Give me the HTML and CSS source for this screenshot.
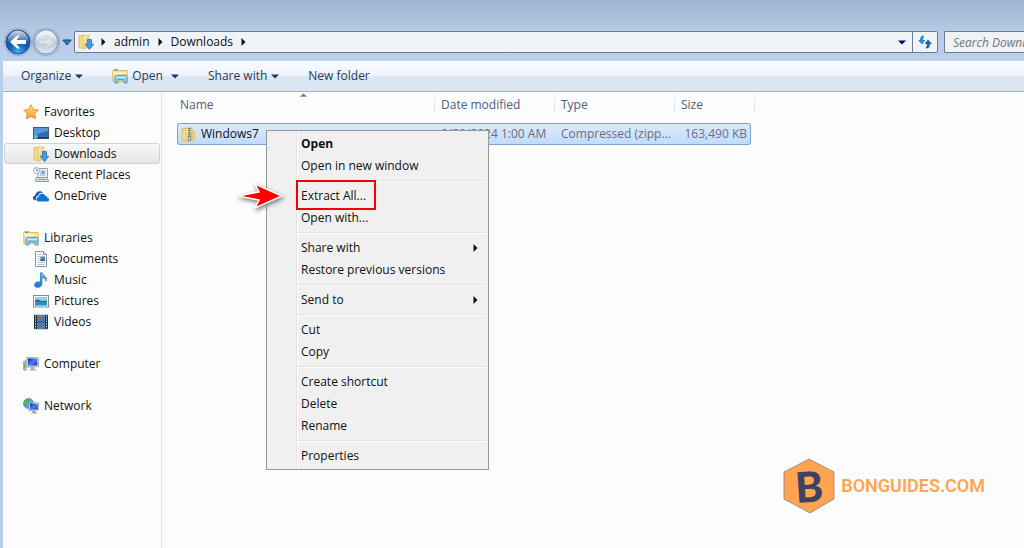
FILE: index.html
```html
<!DOCTYPE html>
<html lang="en">
<head>
    <meta charset="UTF-8">
    <meta name="viewport" content="width=device-width, initial-scale=1.0">
    <title>Downloads</title>
    <link rel="stylesheet" href="styles.css">
</head>
<body>
    <!-- Shared icons -->
    <svg class="sprite" aria-hidden="true">
        <defs>
            <linearGradient id="gFolder" x1="0" y1="0" x2="1" y2="1">
                <stop offset="0" stop-color="#fdf3bd"/>
                <stop offset="1" stop-color="#e3bd5c"/>
            </linearGradient>
            <linearGradient id="gBlue" x1="0" y1="0" x2="0" y2="1">
                <stop offset="0" stop-color="#5fc0f5"/>
                <stop offset="1" stop-color="#1a6fc9"/>
            </linearGradient>
            <linearGradient id="gStar" x1="0" y1="0" x2="0" y2="1">
                <stop offset="0" stop-color="#ffe96a"/>
                <stop offset="1" stop-color="#ff9a1f"/>
            </linearGradient>
            <linearGradient id="gScreen" x1="0" y1="0" x2="1" y2="1">
                <stop offset="0" stop-color="#0a1fa8"/>
                <stop offset="0.5" stop-color="#4a7ff0"/>
                <stop offset="1" stop-color="#0c24b4"/>
            </linearGradient>
            <radialGradient id="gBack" cx="0.5" cy="0.95" r="0.9">
                <stop offset="0" stop-color="#35b4f5"/>
                <stop offset="0.5" stop-color="#1456b4"/>
                <stop offset="1" stop-color="#2e5fa8"/>
            </radialGradient>
            <linearGradient id="gGloss" x1="0" y1="0" x2="0" y2="1">
                <stop offset="0" stop-color="#fff" stop-opacity="0.75"/>
                <stop offset="1" stop-color="#fff" stop-opacity="0.1"/>
            </linearGradient>
            <linearGradient id="gForward" x1="0" y1="0" x2="0" y2="1">
                <stop offset="0" stop-color="#dce4ee"/>
                <stop offset="0.5" stop-color="#b9c7d8"/>
                <stop offset="1" stop-color="#dde8f3"/>
            </linearGradient>
        </defs>
        <symbol id="star" viewBox="0 0 16 16">
            <path d="M8 .8l2.200 4.700 5.200.6-3.800 3.500 1 5.200L8 12.300l-4.600 2.500 1-5.200L.6 6.100l5.200-.6z" fill="url(#gStar)" stroke="#e88a25" stroke-width=".9" stroke-linejoin="round"/>
        </symbol>
        <symbol id="downloads" viewBox="0 0 16 16">
            <path d="M1 1.500h5l1 1v11.500H1z" fill="#f3dc8d" stroke="#d8b65b" stroke-width=".8"/>
            <path d="M5 .8l6 .4v11.600l-6 2.400z" fill="url(#gFolder)" stroke="#dcb963" stroke-width=".6"/>
            <path d="M9.500 5.500h4v4.700h2.200L11.500 15.500 7.300 10.200h2.200z" fill="#3f9ae2" stroke="#1c67b0" stroke-width=".7"/>
        </symbol>
        <symbol id="desktop" viewBox="0 0 16 16">
            <rect x=".5" y="2.500" width="15" height="11" fill="#2f6db8" stroke="#43566e"/>
            <path d="M1 3h14v3Q7 7 1 11z" fill="#5a97d8"/>
            <path d="M1 12h14v1.500H1z" fill="#1b3765"/>
            <circle cx="2.800" cy="11.800" r="2" fill="#5bc2e8"/>
            <circle cx="2.300" cy="11.300" r=".8" fill="#f08a3c"/>
        </symbol>
        <symbol id="recent" viewBox="0 0 16 16">
            <path d="M5 1.500h9.500v9H5z" fill="#eef3f8" stroke="#9aa4ae"/>
            <path d="M7 4h5M7 6h6M7 8h5" stroke="#7fb2d8"/>
            <path d="M9 4h2v3H9z" fill="#56a5d5"/>
            <path d="M3 10.500h11l1.500 4h-13z" fill="#e3e6e9" stroke="#8f979f"/>
            <path d="M5 12.500h8" stroke="#8f979f"/>
            <circle cx="3.500" cy="3.500" r="3" fill="#f5f7f9" stroke="#a0a8b1"/>
            <path d="M3.500 1.500v2h1.500" fill="none" stroke="#4b5865" stroke-width=".7"/>
        </symbol>
        <symbol id="onedrive" viewBox="0 0 16 16">
            <path d="M1.800 12.300C-.8 11.700-.5 7.500 2.200 7.500 2.400 3.300 7.800 1.600 10.200 5c-3-.6-4.700 1-5 2.700-2 .2-2.800 2.900-2 4.600z" fill="#0b63bd"/>
            <path d="M5.700 13.500c-3-.2-2.800-4.200-.2-4.500.2-3.700 5.600-4.600 6.600-1.300 1.500-.2 2.100.8 2 1.900 2.700.3 2.500 3.900.2 3.900z" fill="#0f74d1"/>
        </symbol>
        <symbol id="libraries" viewBox="0 0 16 16">
            <path d="M.8 2.500l1-1.200h4l1 1.200h8.400v11H.8z" fill="url(#gFolder)" stroke="#d0ae5b" stroke-width=".8"/>
            <path d="M2 2.400h3.500" stroke="#5aa852" stroke-width="1.200"/>
            <path d="M1 5h14" stroke="#fffbe0" stroke-width="1.200"/>
            <path d="M3 15V9.500Q3 7.500 5 7.500h8q2 0 2 2V15h-3v-3.500H6V15z" fill="#8ccdf0" stroke="#4f99c9" stroke-width=".9"/>
            <path d="M4 9.200h10" stroke="#e1f5ff"/>
        </symbol>
        <symbol id="document" viewBox="0 0 16 16">
            <path d="M2.500.5h8l3 3v12h-11z" fill="#fdfdfe" stroke="#8794a0"/>
            <path d="M10.500.5v3h3" fill="#dce5ec" stroke="#8794a0"/>
            <path d="M4.500 3.500h4M4.500 5.500h3M4.500 7.500h2M4.500 9.500h2M4.500 11.500h7M4.500 13.500h7" stroke="#b3c3d2"/>
            <path d="M7.500 5.500h4.500v4.500H7.500z" fill="#3f86c8"/>
            <path d="M7.500 8.500h4.500V10H7.500z" fill="#345f49"/>
        </symbol>
        <symbol id="music" viewBox="0 0 16 16">
            <path d="M7.500.8L9 .5c.3 3 5.700 3.500 4 8.700-.5-2.500-2-3.300-4-3.700v6.300c0 4.200-7.500 4.900-7.500 1.200 0-2.500 3.200-3.800 6-2.900z" fill="url(#gBlue)" stroke="#2278bd" stroke-width=".7"/>
        </symbol>
        <symbol id="picture" viewBox="0 0 16 16">
            <rect x=".5" y="2.500" width="15" height="11.500" fill="#fff" stroke="#7f8c97"/>
            <path d="M2 4h12v8.500H2z" fill="#8fd2f1"/>
            <path d="M2 7q4-1.500 6 1l6-.5v2H2z" fill="#2a7566"/>
            <path d="M2 9.500q6-1 12 0v3H2z" fill="#2390bd"/>
        </symbol>
        <symbol id="video" viewBox="0 0 16 16">
            <path d="M1 .8h14v14.400H1z" fill="#26313c"/>
            <path d="M4 1h8v6.500H4zM4 8.300h8V15H4z" fill="#3988c9"/>
            <path d="M5 1l3 3 3-2v3l-3 1-3-2zM7 9l4 1-2 3-4 1 2-3z" fill="#a0604f"/>
            <path d="M2.500 1.500v14M13.500 1.500v14" stroke="#dfe6ea" stroke-dasharray="1.300 1.300"/>
        </symbol>
        <symbol id="computer" viewBox="0 0 16 16">
            <path d="M.5 5.500l2.500-1v10l-2.500-.8z" fill="#b8c0c5" stroke="#79848b" stroke-width=".6"/>
            <path d="M1.500 7v5" stroke="#5ebd4f"/>
            <path d="M3.800 1.300l11.700.5v8.700l-11.700.7z" fill="#d6dade" stroke="#8b949c" stroke-width=".7"/>
            <path d="M5 2.500l9.300.3v6.500L5 9.800z" fill="url(#gScreen)"/>
            <path d="M8 11h3.500v2l2.500 1.500H6L8 13z" fill="#a6adb4"/>
        </symbol>
        <symbol id="network" viewBox="0 0 16 16">
            <circle cx="5.500" cy="5.500" r="5" fill="#48a5e0" stroke="#2272ae" stroke-width=".6"/>
            <path d="M2 2q3-2 5-1L5.500 3.500l-2 1L4 7 2.500 8Q-.2 5 2 2zM8 2l2 2v3L8 6z" fill="#54b548"/>
            <path d="M6 4.300l9.500.7v7l-9.500.8z" fill="#dce4ea" stroke="#7d8891" stroke-width=".6"/>
            <path d="M7 5.300l7.700.6v5.300L7 11.800z" fill="url(#gScreen)"/>
            <path d="M9.500 12.500h3v1.500l2 1.500h-6.500l1.500-1.500z" fill="#9aa4ac"/>
        </symbol>
        <symbol id="zip" viewBox="0 0 16 16">
            <path d="M1 1.500h5l1 1V14H1z" fill="#f3dc8d" stroke="#d8b65b" stroke-width=".8"/>
            <path d="M5 1l6-.2v12.400l-6 2z" fill="url(#gFolder)" stroke="#d8b65b" stroke-width=".7"/>
            <path d="M11 4h2.500v9L11 13.500z" fill="#f0d27e" stroke="#d8b65b" stroke-width=".6"/>
            <path d="M8.300 1v9" stroke="#606974" stroke-width="2.400" stroke-dasharray="1.200 .9"/>
            <path d="M7.200 9.500h2.300v4H7.200z" fill="#d1d7dc" stroke="#59636e" stroke-width=".6"/>
        </symbol>
        <symbol id="down" viewBox="0 0 8 5">
            <path d="M0 .5h8L4 4.500z" fill="currentColor"/>
        </symbol>
        <symbol id="right" viewBox="0 0 5 8">
            <path d="M.5 0L4.500 4 .5 8z" fill="currentColor"/>
        </symbol>
    </svg>

    <div class="window">
        <header class="navbar">
            <div class="history">
                <button class="round" aria-label="Back">
                    <svg viewBox="0 0 26 26">
                        <circle cx="13" cy="13" r="12" fill="url(#gBack)" stroke="#2b4674"/>
                        <path d="M2.500 12a10.500 10.500 0 0 1 21 0q-10 3-21 0z" fill="url(#gGloss)"/>
                        <path d="M5 13l7-6.500h3L11.500 11H21v4h-9.500l3.500 4.500h-3z" fill="#fff"/>
                    </svg>
                </button>
                <button class="round" aria-label="Forward">
                    <svg viewBox="0 0 26 26">
                        <circle cx="13" cy="13" r="12" fill="url(#gForward)" stroke="#8090a6"/>
                        <path d="M2.500 12a10.500 10.500 0 0 1 21 0q-10 3-21 0z" fill="url(#gGloss)"/>
                        <path d="M21 13l-7-6h-2.500l3 4H6v4h8.500l-3 4H14z" fill="#dce3eb" stroke="#bcc7d3" stroke-width=".6"/>
                    </svg>
                </button>
                <button class="recent-pages" aria-label="Recent pages">
                    <svg viewBox="0 0 10 7"><path d="M.8 1h8.400L5 6z" fill="#2f7fc0" stroke="#1d3f72"/></svg>
                </button>
            </div>
            <div class="address">
                <svg class="icon"><use href="#downloads"/></svg>
                <nav class="crumbs">
                    <svg class="right"><use href="#right"/></svg>
                    <a href="#">admin</a>
                    <svg class="right"><use href="#right"/></svg>
                    <a href="#">Downloads</a>
                    <svg class="right"><use href="#right"/></svg>
                </nav>
                <button class="previous" aria-label="Previous locations"><svg class="down"><use href="#down"/></svg></button>
                <button class="refresh" aria-label="Refresh">
                    <svg viewBox="0 0 14 14">
                        <path d="M5.500.5Q2 .8 2 5H0l4 4.500L7.500 5H5Q4.800 2.500 6.500.8z" fill="#2f8ad4"/>
                        <path d="M8.500 13.500q3.500-.3 3.500-4.500h2L10 4.500 6.500 9H9q.2 2.500-1.500 4.200z" fill="#2560ac"/>
                    </svg>
                </button>
            </div>
            <input class="search" type="text" placeholder="Search Downloads" aria-label="Search Downloads">
        </header>

        <div class="toolbar">
            <button>Organize <svg class="down"><use href="#down"/></svg></button>
            <button class="open"><svg class="icon"><use href="#libraries"/></svg>Open <svg class="down"><use href="#down"/></svg></button>
            <button>Share with <svg class="down"><use href="#down"/></svg></button>
            <button>New folder</button>
        </div>

        <div class="content">
            <aside class="sidebar">
                <section class="group">
                    <a class="item root" href="#"><svg class="icon"><use href="#star"/></svg>Favorites</a>
                    <a class="item" href="#"><svg class="icon"><use href="#desktop"/></svg>Desktop</a>
                    <a class="item selected" href="#"><svg class="icon"><use href="#downloads"/></svg>Downloads</a>
                    <a class="item" href="#"><svg class="icon"><use href="#recent"/></svg>Recent Places</a>
                    <a class="item" href="#"><svg class="icon"><use href="#onedrive"/></svg>OneDrive</a>
                </section>
                <section class="group">
                    <a class="item root" href="#"><svg class="icon"><use href="#libraries"/></svg>Libraries</a>
                    <a class="item" href="#"><svg class="icon"><use href="#document"/></svg>Documents</a>
                    <a class="item" href="#"><svg class="icon"><use href="#music"/></svg>Music</a>
                    <a class="item" href="#"><svg class="icon"><use href="#picture"/></svg>Pictures</a>
                    <a class="item" href="#"><svg class="icon"><use href="#video"/></svg>Videos</a>
                </section>
                <section class="group">
                    <a class="item root" href="#"><svg class="icon"><use href="#computer"/></svg>Computer</a>
                </section>
                <section class="group">
                    <a class="item root" href="#"><svg class="icon"><use href="#network"/></svg>Network</a>
                </section>
            </aside>

            <main class="files">
                <table class="file-table">
                    <thead>
                        <tr>
                            <th class="col-name" aria-sort="ascending">Name<svg class="sort" viewBox="0 0 8 4"><path d="M0 4l4-4 4 4z" fill="#5b8cb5"/></svg></th>
                            <th class="col-date">Date modified</th>
                            <th class="col-type">Type</th>
                            <th class="col-size">Size</th>
                        </tr>
                    </thead>
                    <tbody>
                        <tr>
                            <td class="file-name"><svg class="icon"><use href="#zip"/></svg>Windows7</td>
                            <td>9/20/2024 1:00 AM</td>
                            <td>Compressed (zipp...</td>
                            <td class="file-size">163,490 KB</td>
                        </tr>
                    </tbody>
                </table>
            </main>
        </div>
    </div>

    <div class="menu" role="menu">
        <button class="default" role="menuitem">Open</button>
        <button role="menuitem">Open in new window</button>
        <hr>
        <button class="marked" role="menuitem">Extract All...</button>
        <button role="menuitem">Open with...</button>
        <hr>
        <button role="menuitem">Share with<svg class="right"><use href="#right"/></svg></button>
        <button role="menuitem">Restore previous versions</button>
        <hr>
        <button role="menuitem">Send to<svg class="right"><use href="#right"/></svg></button>
        <hr>
        <button role="menuitem">Cut</button>
        <button role="menuitem">Copy</button>
        <hr>
        <button role="menuitem">Create shortcut</button>
        <button role="menuitem">Delete</button>
        <button role="menuitem">Rename</button>
        <hr>
        <button role="menuitem">Properties</button>
    </div>

    <svg class="pointer" viewBox="0 0 48 28" aria-hidden="true">
        <path d="M1 14l21-4-4-8 27 12-27 12 4-8z" fill="#f00" stroke="#fff" stroke-width="1.500"/>
    </svg>

    <div class="brand">
        <svg viewBox="0 0 52 56" aria-hidden="true">
            <path d="M26 1l25 13v27L27 55 1 41V14z" fill="#ffa552" stroke="#8d8171" stroke-width=".8"/>
        </svg>
        <span class="brand-letter">B</span>
        <span>BONGUIDES.COM</span>
    </div>
</body>
</html>
```
FILE: styles.css
```css
*,
*::before,
*::after {
    margin: 0;
    padding: 0;
    box-sizing: border-box;
}

body {
    font-family: 'Open Sans', 'Noto Sans', sans-serif;
    font-size: 12px;
    line-height: 20px;
    color: #111;
    background: #fcfcfc;
    overflow: hidden;
}

button,
input {
    font: inherit;
    color: inherit;
    background: none;
    border: none;
}

a {
    color: inherit;
    text-decoration: none;
}

.sprite {
    position: absolute;
    width: 0;
    height: 0;
}

.icon {
    width: 16px;
    height: 16px;
    flex: none;
}

.down {
    width: 8px;
    height: 5px;
    flex: none;
}

.right {
    width: 5px;
    height: 8px;
    flex: none;
}

.window {
    display: flex;
    flex-direction: column;
    min-height: 100vh;
    border-left: 3px solid #b9d0ea;
    background: #fcfcfc;
}

/* Navigation bar */
.navbar {
    display: flex;
    align-items: center;
    height: 61px;
    margin-left: -3px;
    padding-top: 23px;
    background: linear-gradient(#9fb4d1, #b4c9e4 50%, #bad1ec);
}

.history {
    display: flex;
    align-items: center;
    gap: 2px;
    width: 74px;
    padding-left: 5px;
}

.round {
    width: 26px;
    height: 26px;
    border-radius: 50%;
    box-shadow: 0 0 1px 1px #93a9c6;
}

.round svg {
    display: block;
}

.recent-pages {
    width: 10px;
    height: 20px;
    margin-left: 1px;
}

.address {
    display: flex;
    align-items: center;
    flex: 1;
    height: 22px;
    padding-left: 3px;
    background: #f0f3f8;
    border: 1px solid #6f7b8b;
    border-radius: 2px;
}

.crumbs {
    display: flex;
    align-items: center;
    flex: 1;
    gap: 8px;
    padding-left: 7px;
}

.previous {
    display: flex;
    align-items: center;
    justify-content: center;
    width: 20px;
    height: 20px;
    color: #000066;
}

.refresh {
    display: flex;
    align-items: center;
    justify-content: center;
    width: 25px;
    height: 20px;
    border-left: 1px solid #6f7b8b;
}

.refresh svg {
    width: 14px;
    height: 14px;
}

.search {
    width: 80px;
    height: 22px;
    margin-left: 6px;
    padding-left: 8px;
    background: #eff2f7;
    border: 1px solid #6f7b8b;
    border-right: none;
    border-radius: 2px 0 0 2px;
}

.search::placeholder {
    color: #777;
    font-style: italic;
}

/* Toolbar */
.toolbar {
    display: flex;
    align-items: center;
    gap: 29px;
    height: 31px;
    padding-left: 18px;
    color: #1e395b;
    background: linear-gradient(#fbfdff, #edf3fa 50%, #dde7f3 51%, #dbe6f3);
    border-bottom: 1px solid #9fb2ca;
}

.toolbar button {
    display: flex;
    align-items: center;
    gap: 4px;
}

.toolbar .open .down {
    margin-left: 4px;
}

/* Navigation pane */
.content {
    display: flex;
    flex: 1;
}

.sidebar {
    flex: none;
    width: 159px;
    padding: 9px 1px;
    border-right: 1px solid #d6e3f3;
}

.group {
    margin-bottom: 21px;
}

.item {
    display: flex;
    align-items: center;
    gap: 5px;
    height: 21px;
    padding-left: 28px;
    border: 1px solid transparent;
    border-radius: 3px;
}

.item.root {
    padding-left: 18px;
}

.item.selected {
    background: linear-gradient(#f8f8f8, #e5e5e5);
    border-color: #d2d2d2;
}

/* File list */
.files {
    flex: 1;
    padding-left: 15px;
}

.file-table {
    width: 574px;
    table-layout: fixed;
    border-spacing: 0;
    color: #6b7078;
}

.file-table th {
    position: relative;
    height: 31px;
    padding: 3px 0 0 6px;
    vertical-align: top;
    text-align: left;
    font-weight: normal;
    color: #4c607a;
}

.file-table th::after {
    content: '';
    position: absolute;
    top: 0;
    right: 0;
    width: 1px;
    height: 20px;
    background: linear-gradient(#f0f4fa, #dce6f2);
}

.file-table .col-size::after {
    right: -4px;
}

.file-table .col-name {
    width: 258px;
    padding-left: 3px;
}

.file-table .col-date,
.file-table .col-type {
    width: 120px;
}

.sort {
    position: absolute;
    top: 1px;
    left: calc(50% - 6px);
    width: 7px;
    height: 4px;
}

.file-table td {
    height: 22px;
    padding-left: 6px;
    white-space: nowrap;
    line-height: 20px;
    background: linear-gradient(#dcebfc, #c1dbfc);
    border: solid #7da2ce;
    border-width: 1px 0;
}

.file-table .file-name {
    padding-left: 3px;
    color: #111;
    border-left-width: 1px;
    border-radius: 3px 0 0 3px;
}

.file-name .icon {
    margin-right: 4px;
    vertical-align: middle;
}

.file-table .file-size {
    padding-right: 3px;
    text-align: right;
    border-right-width: 1px;
    border-radius: 0 3px 3px 0;
}

/* Context menu */
.menu {
    position: absolute;
    top: 130px;
    left: 266px;
    width: 223px;
    padding: 2px;
    background: linear-gradient(90deg, transparent 29px, #e2e3e3 29px, #e2e3e3 30px, #fff 30px, #fff 31px, transparent 31px) #f0f0f0;
    border: 1px solid #979797;
}

.menu button {
    display: flex;
    align-items: center;
    justify-content: space-between;
    width: 100%;
    height: 22px;
    padding: 0 8px 0 32px;
}

.menu .default {
    font-weight: bold;
}

.menu hr {
    height: 2px;
    margin: 3px 0 3px 28px;
    border: none;
    border-top: 1px solid #e0e0e0;
    border-bottom: 1px solid #fff;
}

.menu .marked {
    position: relative;
}

.marked::after {
    content: '';
    position: absolute;
    top: -5px;
    left: 27px;
    width: 80px;
    height: 30px;
    border: 2px solid #f40000;
}

.pointer {
    position: absolute;
    top: 182px;
    left: 237px;
    width: 48px;
    height: 28px;
    filter: drop-shadow(1px 2px 2px #777);
}

/* Watermark */
.brand {
    position: absolute;
    right: 39px;
    bottom: 34px;
    display: flex;
    align-items: center;
    gap: 6px;
    font-family: Roboto, sans-serif;
    font-size: 18px;
    font-weight: 600;
    color: #ffa552;
}

.brand svg {
    width: 52px;
    height: 56px;
}

.brand-letter {
    position: absolute;
    left: 0;
    width: 52px;
    line-height: 54px;
    text-align: center;
    font-family: Lato, sans-serif;
    font-size: 42px;
    font-weight: 900;
    color: #3e4263;
    transform: rotate(-4deg);
}
```
